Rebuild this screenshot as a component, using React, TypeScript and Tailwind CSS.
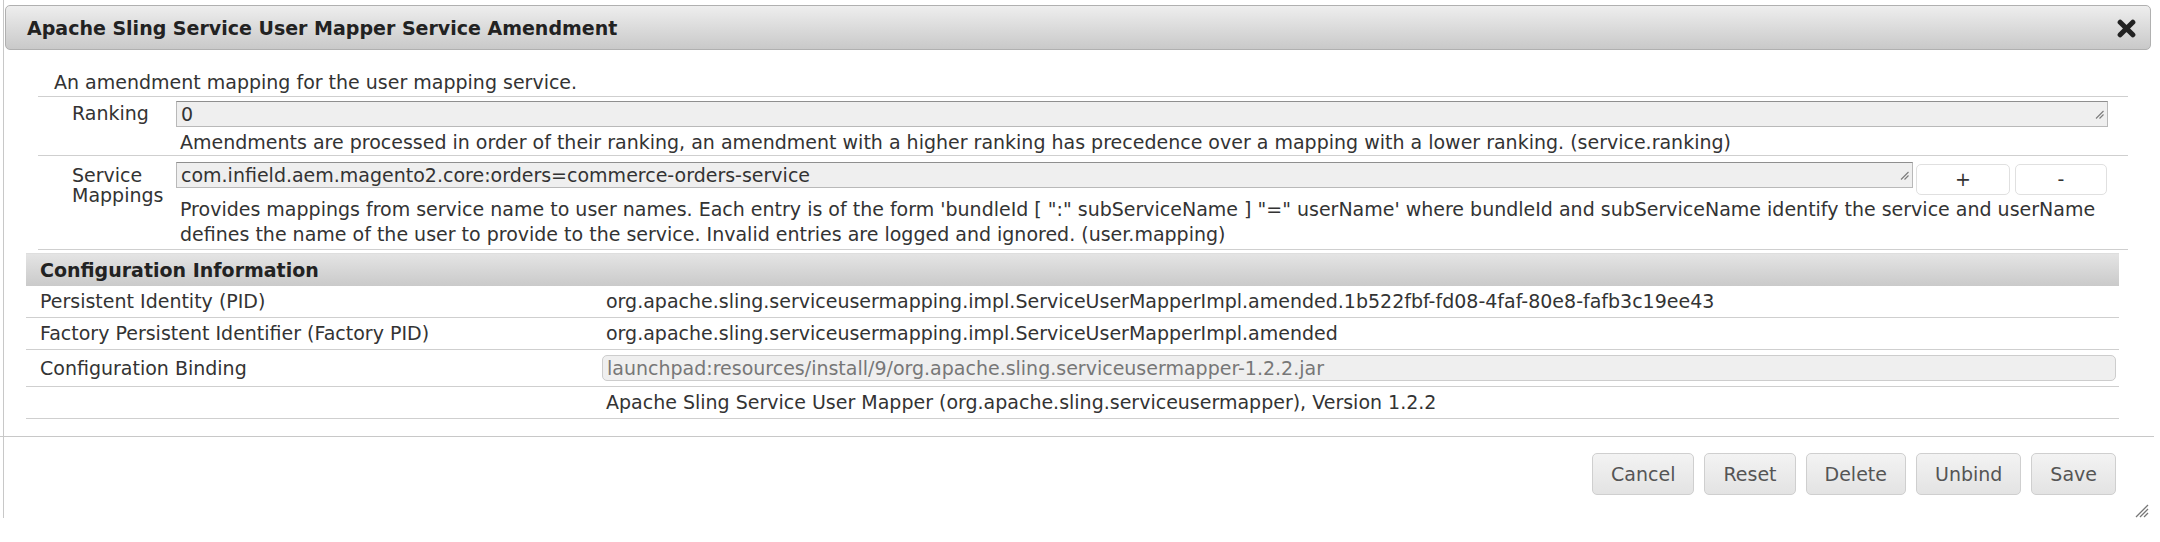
import React from 'react'

const SERVICE_DESC_1 =
  'Provides mappings from service name to user names. Each entry is of the form \'bundleId [ ":" subServiceName ] "=" userName\' where bundleId and subServiceName identify the service and userName'
const SERVICE_DESC_2 =
  'defines the name of the user to provide to the service. Invalid entries are logged and ignored. (user.mapping)'

function Grip({ size = 10 }: { size?: number }) {
  return (
    <svg width={size} height={size} viewBox="0 0 10 10" className="shrink-0">
      <line x1="9.5" y1="2" x2="2" y2="9.5" stroke="#7a7a7a" strokeWidth="1.1" />
      <line x1="9.5" y1="5.5" x2="5.5" y2="9.5" stroke="#7a7a7a" strokeWidth="1.1" />
    </svg>
  )
}

function TextBox({ value, className = '' }: { value: string; className?: string }) {
  return (
    <div
      className={`h-[26px] flex items-center justify-between bg-[#efefef] border border-[#b9b9b9] border-t-[#8f8f8f] pl-[4px] pr-[3px] text-[#333] leading-none ${className}`}
    >
      <span>{value}</span>
      <Grip />
    </div>
  )
}

const INFO_ROWS = [
  {
    label: 'Persistent Identity (PID)',
    value: 'org.apache.sling.serviceusermapping.impl.ServiceUserMapperImpl.amended.1b522fbf-fd08-4faf-80e8-fafb3c19ee43',
  },
  {
    label: 'Factory Persistent Identifier (Factory PID)',
    value: 'org.apache.sling.serviceusermapping.impl.ServiceUserMapperImpl.amended',
  },
]

const BUTTONS = ['Cancel', 'Reset', 'Delete', 'Unbind', 'Save']

export default function App() {
  return (
    <div className="w-[2160px] h-[542px] bg-white overflow-hidden font-['DejaVu_Sans',sans-serif] text-[19px] leading-[25px] text-[#333]">
      <div className="relative ml-[3px] w-[2152px] h-[518px] pt-[5px] border-l border-[#c8c8c8]">
        {/* Title bar */}
        <div className="ml-[1px] w-[2146px] h-[45px] rounded-[5px] border border-[#b0b0b0] bg-linear-to-b from-[#eeeeee] to-[#c9c9c9] flex items-center justify-between pl-[21px] pr-[14px] pt-[1px]">
          <span className="font-bold text-[#222]">Apache Sling Service User Mapper Service Amendment</span>
          <svg width="19" height="19" viewBox="0 0 18 18">
            <path d="M3 3 L15 15 M15 3 L3 15" stroke="#222" strokeWidth="4.8" strokeLinecap="round" />
          </svg>
        </div>

        {/* Description */}
        <div className="mt-[20px] pl-[50px]">An amendment mapping for the user mapping service.</div>

        {/* Properties form */}
        <div className="mt-[1px] ml-[34px] w-[2090px] border-t border-[#cfcfcf]">
          <div className="flex border-b border-[#cfcfcf]">
            <div className="w-[138px] pl-[34px] pt-[4px] shrink-0">Ranking</div>
            <div className="flex-1 pr-[20px]">
              <TextBox value="0" className="mt-[4px]" />
              <div className="mt-[3px] pl-[4px]">
                Amendments are processed in order of their ranking, an amendment with a higher ranking has precedence over a mapping with a lower ranking. (service.ranking)
              </div>
            </div>
          </div>
          <div className="flex border-b border-[#cfcfcf] pb-[2px]">
            <div className="w-[138px] pl-[34px] pt-[9px] leading-[20px] shrink-0">
              Service
              <br />
              Mappings
            </div>
            <div className="flex-1 pr-[21px]">
              <div className="flex items-start">
                <TextBox value="com.infield.aem.magento2.core:orders=commerce-orders-service" className="mt-[6px] flex-1" />
                <button className="ml-[3px] mt-[8px] w-[94px] h-[31px] rounded-[5px] border border-[#e0e0e0] bg-white text-[#333] leading-none">
                  +
                </button>
                <button className="ml-[5px] mt-[8px] w-[92px] h-[31px] rounded-[5px] border border-[#e0e0e0] bg-white text-[#333] leading-none">
                  -
                </button>
              </div>
              <div className="mt-[2px] pl-[4px] whitespace-nowrap">
                {SERVICE_DESC_1}
                <br />
                {SERVICE_DESC_2}
              </div>
            </div>
          </div>
        </div>

        {/* Configuration information */}
        <div className="mt-[3px] ml-[22px] w-[2093px]">
          <div className="h-[33px] flex items-center pl-[14px] font-bold text-[#222] bg-linear-to-b from-[#e4e4e4] to-[#cacaca] border-t border-[#dedede]">
            Configuration Information
          </div>
          {INFO_ROWS.map((row) => (
            <div key={row.label} className="flex py-[3px] border-b border-[#cfcfcf]">
              <div className="w-[566px] pl-[14px] shrink-0">{row.label}</div>
              <div className="pl-[14px]">{row.value}</div>
            </div>
          ))}
          <div className="flex items-center py-[5px] border-b border-[#cfcfcf]">
            <div className="w-[566px] pl-[14px] shrink-0">Configuration Binding</div>
            <div className="ml-[10px] w-[1514px] h-[26px] flex items-center rounded-[5px] bg-[#efefef] border border-[#cdcdcd] pl-[4px] text-[#777] leading-none">
              launchpad:resources/install/9/org.apache.sling.serviceusermapper-1.2.2.jar
            </div>
          </div>
          <div className="flex py-[3px] border-b border-[#cfcfcf]">
            <div className="w-[566px] pl-[14px] shrink-0" />
            <div className="pl-[14px]">Apache Sling Service User Mapper (org.apache.sling.serviceusermapper), Version 1.2.2</div>
          </div>
        </div>

        {/* Button pane */}
        <div className="mt-[17px] -ml-[4px] w-[2154px] border-t border-[#c8c8c8] flex justify-end gap-[10px] pr-[38px] pt-[16px]">
          {BUTTONS.map((label) => (
            <button
              key={label}
              className="h-[42px] px-[18px] rounded-[5px] border border-[#cfcfcf] bg-linear-to-b from-[#f3f3f3] to-[#e3e3e3] text-[#555] leading-none"
            >
              {label}
            </button>
          ))}
        </div>

        {/* Dialog resize grip */}
        <svg width="16" height="16" viewBox="0 0 16 16" className="absolute right-[6px] bottom-[0px]">
          <line x1="15" y1="3" x2="3" y2="15" stroke="#777" strokeWidth="1.3" />
          <line x1="15" y1="7" x2="7" y2="15" stroke="#777" strokeWidth="1.3" />
          <line x1="15" y1="11" x2="11" y2="15" stroke="#777" strokeWidth="1.3" />
        </svg>
      </div>
    </div>
  )
}
